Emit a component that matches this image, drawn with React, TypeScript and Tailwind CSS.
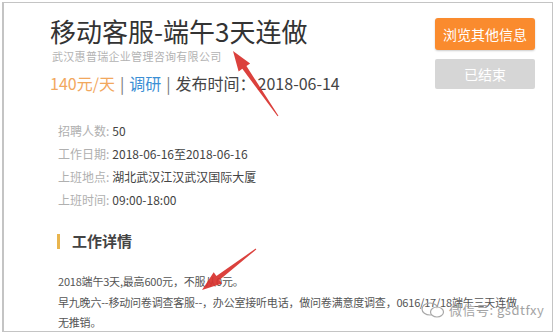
const font = { fontFamily: '"Noto Sans CJK SC", "Noto Sans", sans-serif' };

const info = [
  { label: "招聘人数:", value: "50" },
  { label: "工作日期:", value: "2018-06-16至2018-06-16" },
  { label: "上班地点:", value: "湖北武汉江汉武汉国际大厦" },
  { label: "上班时间:", value: "09:00-18:00" },
];

function Arrow({ x1, y1, x2, y2 }: { x1: number; y1: number; x2: number; y2: number }) {
  // tail (x1,y1) -> tip (x2,y2), shaft widens toward the head
  const dx = x2 - x1;
  const dy = y2 - y1;
  const len = Math.hypot(dx, dy);
  const ux = dx / len;
  const uy = dy / len;
  const nx = -uy;
  const ny = ux;
  const headLen = 20;
  const bx = x2 - ux * headLen;
  const by = y2 - uy * headLen;
  const pts = [
    [x1 + nx * 0.5, y1 + ny * 0.5],
    [bx + nx * 2.5, by + ny * 2.5],
    [bx + nx * 7, by + ny * 7],
    [x2, y2],
    [bx - nx * 7, by - ny * 7],
    [bx - nx * 2.5, by - ny * 2.5],
    [x1 - nx * 0.5, y1 - ny * 0.5],
  ]
    .map((p) => p.join(","))
    .join(" ");
  return <polygon points={pts} fill="#d8312c" fillOpacity={0.92} />;
}

export default function App() {
  return (
    <div className="w-[556px] h-[334px] bg-white pt-[2px] pl-[2px] relative overflow-hidden" style={font}>
      <div className="w-[551px] h-[330px] border border-[#c4c4c4] border-l-2 flex justify-between pl-[46px] pr-[17px]">
        <div className="flex flex-col flex-1 min-w-0">
          <div className="mt-[13px] text-[26px] leading-[30px] text-[#333]">移动客服-端午3天连做</div>
          <div className="mt-[3px] ml-[2px] text-[11px] leading-[14px] text-[#b3b3b3] tracking-[0.3px]">
            武汉惠普瑞企业管理咨询有限公司
          </div>
          <div className="mt-[10px] text-[16px] leading-[20px] text-[#444] flex items-center">
            <span className="text-[#f2a85e]">140元/天</span>
            <span className="mx-[5px] text-[#777]">|</span>
            <span className="text-[#3b8fd5]">调研</span>
            <span className="mx-[5px] text-[#777]">|</span>
            <span>发布时间：</span>
            <span className="ml-[2px]">2018-06-14</span>
          </div>
          <div className="mt-[26px] ml-[8px] flex flex-col">
            {info.map((r) => (
              <div key={r.label} className="text-[12px] leading-[23px]">
                <span className="text-[#b0b0b0]">{r.label}</span>
                <span className="ml-[3px] text-[#444]">{r.value}</span>
              </div>
            ))}
          </div>
          <div className="mt-[20px] ml-[7px] flex items-center">
            <span className="w-[3px] h-[15px] bg-[#e9b54e]" />
            <span className="ml-[12px] text-[15px] leading-[20px] font-bold text-[#444]">工作详情</span>
          </div>
          <div className="mt-[20px] ml-[8px] text-[11px] leading-[20.5px] text-[#555] whitespace-nowrap tracking-[-0.2px]">
            <div>2018端午3天,最高600元，不服从0元。</div>
            <div>早九晚六--移动问卷调查客服--，办公室接听电话，做问卷满意度调查，0616/17/18端午三天连做</div>
            <div>无推销。</div>
          </div>
        </div>
        <div className="flex flex-col mt-[15px] w-[100px] shrink-0">
          <div className="h-[32px] rounded-[3px] bg-[#fa8b2e] shadow-[0_1px_2px_rgba(0,0,0,0.2)] text-white text-[14px] flex items-center justify-center">
            浏览其他信息
          </div>
          <div className="mt-[9px] h-[30px] rounded-[2px] bg-[#d6d6d6] text-white text-[14px] flex items-center justify-center">
            已结束
          </div>
        </div>
      </div>

      <div className="absolute left-[420px] top-[301px] flex items-center text-[#9a9a9a] opacity-90">
        <svg width="26" height="18" viewBox="0 0 26 18" fill="none" stroke="#a0a0a0" strokeWidth="1.2">
          <ellipse cx="10" cy="8" rx="8" ry="6" />
          <ellipse cx="17" cy="11" rx="6.5" ry="5" fill="white" />
        </svg>
        <span className="ml-[3px] text-[13px] leading-[16px] tracking-[0.5px]">微信号: gsdtfxy</span>
      </div>

      <svg className="absolute left-0 top-0 pointer-events-none" width="556" height="334">
        <Arrow x1={278} y1={116} x2={233} y2={51} />
        <Arrow x1={256} y1={249} x2={202} y2={290} />
      </svg>
    </div>
  );
}
